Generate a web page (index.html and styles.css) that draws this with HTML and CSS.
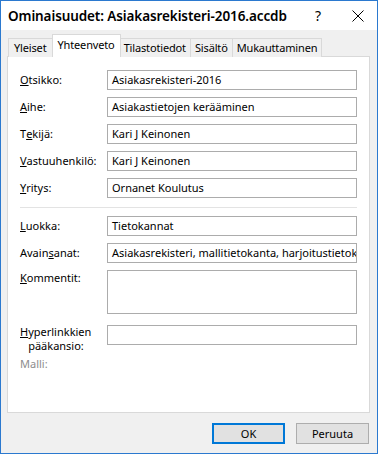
FILE: index.html
```html
<!DOCTYPE html>
<html lang="fi">
<head>
<meta charset="utf-8">
<title>Ominaisuudet</title>
<link rel="stylesheet" href="styles.css">
</head>
<body>
<div class="window">
  <div class="titlebar">
    <span class="title">Ominaisuudet: Asiakasrekisteri-2016.accdb</span>
    <span class="help">?</span>
    <span class="close">
      <svg width="12" height="12" viewBox="0 0 12 12"><path d="M0.5 0.5 L11.5 11.5 M11.5 0.5 L0.5 11.5" stroke="#000" stroke-width="1" fill="none"/></svg>
    </span>
  </div>
  <div class="client">
    <div class="tabs">
      <div class="tab">Yleiset</div>
      <div class="tab active">Yhteenveto</div>
      <div class="tab">Tilastotiedot</div>
      <div class="tab">Sisältö</div>
      <div class="tab">Mukauttaminen</div>
    </div>
    <div class="panel">
      <div class="grid">
        <label class="lbl"><u>O</u>tsikko:</label><div class="field">Asiakasrekisteri-2016</div>
        <label class="lbl"><u>A</u>ihe:</label><div class="field">Asiakastietojen kerääminen</div>
        <label class="lbl">T<u>e</u>kijä:</label><div class="field">Kari J Keinonen</div>
        <label class="lbl"><u>V</u>astuuhenkilö:</label><div class="field">Kari J Keinonen</div>
        <label class="lbl"><u>Y</u>ritys:</label><div class="field">Ornanet Koulutus</div>
      </div>
      <div class="sep"></div>
      <div class="grid">
        <label class="lbl"><u>L</u>uokka:</label><div class="field">Tietokannat</div>
        <label class="lbl">Avain<u>s</u>anat:</label><div class="field">Asiakasrekisteri, mallitietokanta, harjoitustietokanta</div>
        <label class="lbl top"><u>K</u>ommentit:</label><div class="field tall"></div>
        <label class="lbl top two"><u>H</u>yperlinkkien pääkansio:</label><div class="field"></div>
      </div>
      <div class="malli">Malli:</div>
    </div>
    <div class="buttons">
      <div class="btn ok">OK</div>
      <div class="btn">Peruuta</div>
    </div>
  </div>
</div>
</body>
</html>
```
FILE: styles.css
```css
html, body {
  margin: 0;
  padding: 0;
}
body {
  width: 378px;
  height: 454px;
  overflow: hidden;
  font-family: "Noto Sans", "Open Sans", sans-serif;
  font-size: 11px;
  color: #000;
}
.window {
  box-sizing: border-box;
  width: 378px;
  height: 454px;
  border: 1px solid #2b79cf;
  display: flex;
  flex-direction: column;
  background: #f0f0f0;
}
.titlebar {
  height: 29px;
  background: #fff;
  display: flex;
  align-items: center;
  padding-left: 7px;
  flex: none;
}
.title {
  font-size: 13.5px;
  font-weight: 600;
  white-space: nowrap;
  letter-spacing: -0.1px;
}
.help {
  margin-left: auto;
  font-size: 14px;
  width: 42px;
  text-align: center;
}
.close {
  width: 38px;
  display: flex;
  justify-content: center;
}
.client {
  flex: 1;
  display: flex;
  flex-direction: column;
  padding: 5px 7px 0 6px;
}
.tabs {
  display: flex;
  align-items: flex-end;
  height: 22px;
  padding-left: 1px;
  position: relative;
  z-index: 1;
  margin-bottom: -1px;
}
.tab {
  box-sizing: border-box;
  height: 19px;
  padding: 0 4px;
  border: 1px solid #d9d9d9;
  border-bottom: none;
  border-left: none;
  background: #f0f0f0;
  line-height: 17px;
  letter-spacing: -0.15px;
}
.tab:first-child {
  border-left: 1px solid #d9d9d9;
  padding: 0 5px;
}
.tab.active {
  height: 23px;
  background: #fff;
  border-left: 1px solid #d9d9d9;
  margin-left: -1px;
  margin-right: -1px;
  padding: 0 5px;
  line-height: 19px;
  position: relative;
  z-index: 2;
}
.panel {
  box-sizing: border-box;
  height: 357px;
  background: #fff;
  border: 1px solid #d9d9d9;
  padding: 13px 12px 0 12px;
  flex: none;
}
.grid {
  display: grid;
  grid-template-columns: 87px 1fr;
  row-gap: 7px;
}
.lbl {
  display: flex;
  align-items: center;
  line-height: 14px;
}
.lbl.top {
  align-items: flex-start;
  padding-top: 1px;
}
.lbl.two {
  padding-top: 0;
}
.field {
  box-sizing: border-box;
  height: 20px;
  border: 1px solid #acacac;
  padding: 0 4px;
  line-height: 18px;
  white-space: nowrap;
  overflow: hidden;
}
.field.tall {
  height: 44px;
  margin-bottom: 4px;
}
.sep {
  height: 1px;
  background: #e3e3e3;
  margin: 9px 0 8px 0;
}
.malli {
  color: #8d8d8d;
  margin-top: 4px;
  line-height: 14px;
}
.buttons {
  display: flex;
  justify-content: flex-end;
  gap: 11px;
  margin-top: 10px;
  padding-right: 1px;
}
.btn {
  box-sizing: border-box;
  width: 73px;
  height: 21px;
  background: #e1e1e1;
  border: 1px solid #adadad;
  text-align: center;
  line-height: 19px;
}
.btn.ok {
  border: 2px solid #0078d7;
  line-height: 17px;
}
```
